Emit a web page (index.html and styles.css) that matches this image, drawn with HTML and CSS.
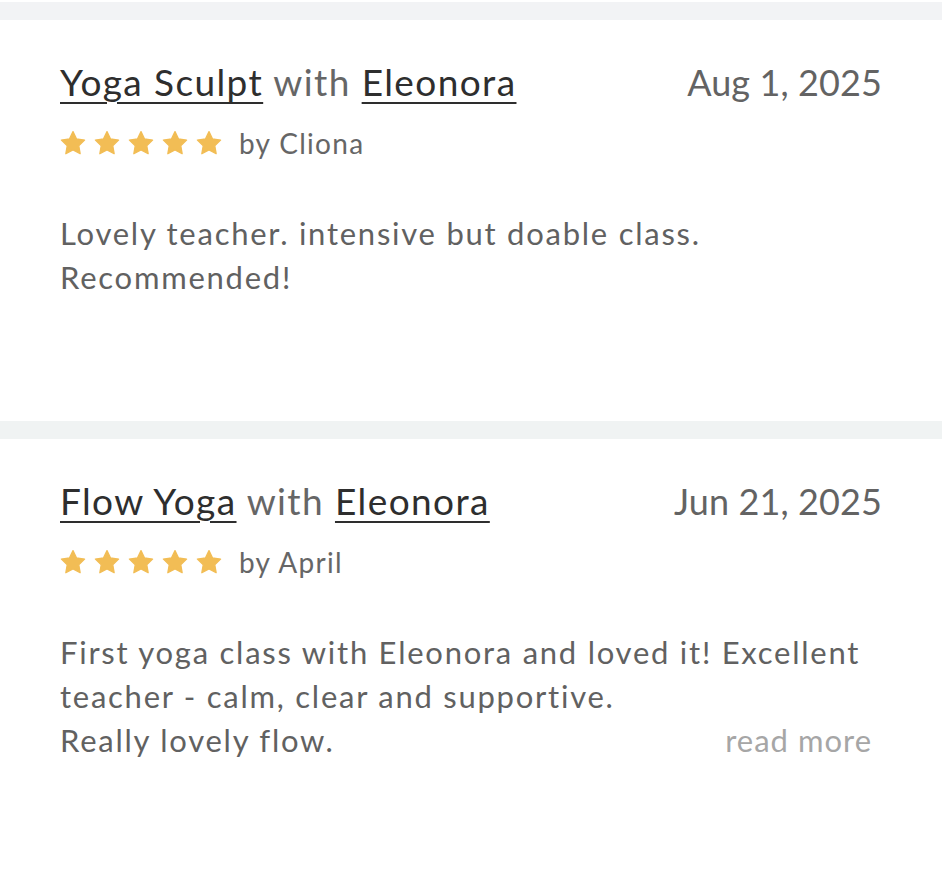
FILE: index.html
```html
<!DOCTYPE html>
<html lang="en">
<head>
    <meta charset="UTF-8">
    <meta name="viewport" content="width=device-width, initial-scale=1.0">
    <title>Reviews</title>
    <link rel="stylesheet" href="styles.css">
</head>
<body>
    <div class="gap-band top"></div>

    <div class="review">
        <div class="review-head">
            <h3 class="review-title"><a href="#">Yoga Sculpt</a> with <a href="#">Eleonora</a></h3>
            <span class="review-date">Aug 1, 2025</span>
        </div>
        <div class="rating">
            <span class="stars">
                <svg viewBox="0 0 24 24"><path d="M12 1.5l3.3 6.8 7.4 1-5.4 5.2 1.3 7.4L12 18.4l-6.6 3.5 1.3-7.4-5.4-5.2 7.4-1z"/></svg>
                <svg viewBox="0 0 24 24"><path d="M12 1.5l3.3 6.8 7.4 1-5.4 5.2 1.3 7.4L12 18.4l-6.6 3.5 1.3-7.4-5.4-5.2 7.4-1z"/></svg>
                <svg viewBox="0 0 24 24"><path d="M12 1.5l3.3 6.8 7.4 1-5.4 5.2 1.3 7.4L12 18.4l-6.6 3.5 1.3-7.4-5.4-5.2 7.4-1z"/></svg>
                <svg viewBox="0 0 24 24"><path d="M12 1.5l3.3 6.8 7.4 1-5.4 5.2 1.3 7.4L12 18.4l-6.6 3.5 1.3-7.4-5.4-5.2 7.4-1z"/></svg>
                <svg viewBox="0 0 24 24"><path d="M12 1.5l3.3 6.8 7.4 1-5.4 5.2 1.3 7.4L12 18.4l-6.6 3.5 1.3-7.4-5.4-5.2 7.4-1z"/></svg>
            </span>
            <span class="author">by Cliona</span>
        </div>
        <p class="review-body">Lovely teacher. intensive but doable class.<br>Recommended!</p>
    </div>

    <div class="gap-band"></div>

    <div class="review">
        <div class="review-head">
            <h3 class="review-title"><a href="#">Flow Yoga</a> with <a href="#">Eleonora</a></h3>
            <span class="review-date">Jun 21, 2025</span>
        </div>
        <div class="rating">
            <span class="stars">
                <svg viewBox="0 0 24 24"><path d="M12 1.5l3.3 6.8 7.4 1-5.4 5.2 1.3 7.4L12 18.4l-6.6 3.5 1.3-7.4-5.4-5.2 7.4-1z"/></svg>
                <svg viewBox="0 0 24 24"><path d="M12 1.5l3.3 6.8 7.4 1-5.4 5.2 1.3 7.4L12 18.4l-6.6 3.5 1.3-7.4-5.4-5.2 7.4-1z"/></svg>
                <svg viewBox="0 0 24 24"><path d="M12 1.5l3.3 6.8 7.4 1-5.4 5.2 1.3 7.4L12 18.4l-6.6 3.5 1.3-7.4-5.4-5.2 7.4-1z"/></svg>
                <svg viewBox="0 0 24 24"><path d="M12 1.5l3.3 6.8 7.4 1-5.4 5.2 1.3 7.4L12 18.4l-6.6 3.5 1.3-7.4-5.4-5.2 7.4-1z"/></svg>
                <svg viewBox="0 0 24 24"><path d="M12 1.5l3.3 6.8 7.4 1-5.4 5.2 1.3 7.4L12 18.4l-6.6 3.5 1.3-7.4-5.4-5.2 7.4-1z"/></svg>
            </span>
            <span class="author">by April</span>
        </div>
        <div class="review-body clamp">
            <p>First yoga class with Eleonora and loved it! Excellent teacher - calm, clear and supportive.</p>
            <div class="last-line">
                <span>Really lovely flow.</span>
                <a href="#" class="read-more">read more</a>
            </div>
        </div>
    </div>
</body>
</html>
```

FILE: styles.css
```css
body { margin: 0; background: #fff; font-family: Lato, "Open Sans", sans-serif; color: #616161; }
a { color: inherit; }

.gap-band { height: 18px; background: #f0f3f3; }
.gap-band.top { margin-top: 2px; background: #f2f3f5; }

.review { padding: 40px 60px 0 60px; height: 401px; box-sizing: border-box; }
.review:last-child { height: auto; padding-bottom: 100px; }

.review-head { display: flex; justify-content: space-between; align-items: baseline; }
.review-title { margin: 0; font-size: 37px; font-weight: 400; color: #666; line-height: 44px; letter-spacing: 1.4px; }
.review-title a { color: #2e2e2e; text-decoration: underline; text-decoration-thickness: 2px; text-underline-offset: 6px; }
.review-date { font-size: 36px; color: #636363; line-height: 44px; letter-spacing: 0.1px; }

.rating { display: flex; align-items: center; margin-top: 21px; height: 36px; }
.stars { display: flex; gap: 8px; }
.stars svg { width: 26px; height: 26px; fill: #f2bd55; stroke: #f2bd55; stroke-width: 1.2; stroke-linejoin: round; }
.author { margin-left: 17px; font-size: 28px; line-height: 36px; color: #666; letter-spacing: 1.3px; }

.review-body { margin: 50px 0 0 0; font-size: 31px; line-height: 44px; color: #616161; letter-spacing: 1.75px; }
.clamp p { margin: 0; }
.last-line { display: flex; justify-content: space-between; }
.read-more { color: #a6a6a6; text-decoration: none; margin-right: 10px; letter-spacing: 1px; }
```
